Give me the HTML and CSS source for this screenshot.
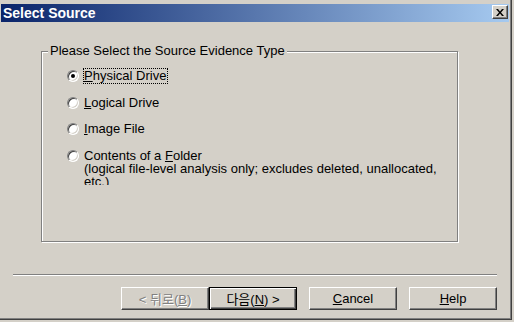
FILE: index.html
```html
<!DOCTYPE html>
<html lang="ko">
<head>
  <meta charset="UTF-8">
  <title>Select Source</title>
  <link rel="stylesheet" href="styles.css">
</head>
<body>

<div class="window">

  <!-- TITLE BAR -->
  <div class="titlebar">
    <span class="title">Select Source</span>
    <span class="close-btn">
      <svg width="8" height="7" viewBox="0 0 8 7">
        <path d="M0 0h2l2 2.5L6 0h2L5 3.5 8 7H6L4 4.5 2 7H0l3-3.5z" fill="#000"/>
      </svg>
    </span>
  </div>

  <div class="client">

    <!-- SOURCE TYPE -->
    <div class="group">
      <span class="legend">Please Select the Source Evidence Type</span>

      <label class="radio-row">
        <span class="radio checked"></span>
        <span class="caption focus"><u>P</u>hysical Drive</span>
      </label>
      <label class="radio-row">
        <span class="radio"></span>
        <span class="caption"><u>L</u>ogical Drive</span>
      </label>
      <label class="radio-row">
        <span class="radio"></span>
        <span class="caption"><u>I</u>mage File</span>
      </label>
      <label class="radio-row">
        <span class="radio"></span>
        <span class="caption">Contents of a <u>F</u>older</span>
      </label>
      <div class="note">(logical file-level analysis only; excludes deleted, unallocated, etc.)</div>
    </div>

    <div class="separator"></div>

    <!-- BUTTONS -->
    <div class="buttons">
      <span class="btn disabled"><span class="kr">&lt; 뒤로(<u>B</u>)</span></span>
      <span class="btn default"><span class="kr">다음(<u>N</u>) &gt;</span></span>
      <span class="btn gap"><u>C</u>ancel</span>
      <span class="btn gap"><u>H</u>elp</span>
    </div>

  </div>
</div>

</body>
</html>
```

FILE: styles.css
```css
body {
    margin: 0;
    background-color: #d4d0c8;
    font-family: "Liberation Sans", Arial, "Noto Sans CJK KR", sans-serif;
    font-size: 13px;
    color: #000;
}

.window {
    width: 512px;
    height: 320px;
    box-sizing: border-box;
    padding: 4px 3px 3px 1px;
    background-color: #d4d0c8;
    box-shadow: inset -1px -1px #404040, inset -2px -2px #808080;
}

.titlebar {
    height: 18px;
    display: flex;
    align-items: flex-start;
    justify-content: space-between;
    background: linear-gradient(to right, #0a246a, #a6caf0);
}

.title {
    color: #fff;
    font-weight: bold;
    font-size: 14px;
    line-height: 18px;
    padding-left: 2px;
}

.close-btn {
    width: 16px;
    height: 14px;
    box-sizing: border-box;
    margin: 1px 1px 0 0;
    display: flex;
    align-items: center;
    justify-content: center;
    background-color: #d4d0c8;
    border: 1px solid;
    border-color: #fff #404040 #404040 #fff;
    box-shadow: inset -1px -1px #808080;
}

.client {
    display: flex;
    flex-direction: column;
}

.group {
    position: relative;
    margin: 29px 0 0 40px;
    width: 417px;
    height: 191px;
    box-sizing: border-box;
    border: 1px solid #808080;
    box-shadow: inset 1px 1px #fff, 1px 1px #fff;
    padding: 16px 0 0 25px;
    display: flex;
    flex-direction: column;
    gap: 10.5px;
}

.legend {
    position: absolute;
    top: -9px;
    left: 6px;
    padding: 0 2px;
    line-height: 16px;
    background-color: #d4d0c8;
}

.radio-row {
    display: flex;
    align-items: center;
    height: 16px;
}

.radio {
    width: 12px;
    height: 12px;
    box-sizing: border-box;
    border-radius: 50%;
    background-color: #fff;
    border: 1px solid;
    border-color: #808080 #fff #fff #808080;
    box-shadow: inset 1px 1px #404040, inset -1px -1px #d4d0c8;
    display: flex;
    align-items: center;
    justify-content: center;
    margin-right: 4px;
}

.radio.checked::after {
    content: "";
    width: 4px;
    height: 4px;
    border-radius: 50%;
    background-color: #000;
}

.caption {
    border: 1px dotted transparent;
    line-height: 14px;
    padding-right: 1px;
}

.caption.focus {
    border-color: #000;
}

.note {
    margin: -12px 0 0 17px;
    width: 370px;
    height: 23px;
    overflow: hidden;
    line-height: 13px;
}

.separator {
    margin: 32px 0 0 12px;
    width: 484px;
    border-top: 1px solid #808080;
    border-bottom: 1px solid #fff;
}

.buttons {
    display: flex;
    margin: 11px 0 0 120px;
}

.btn {
    width: 88px;
    height: 23px;
    box-sizing: border-box;
    display: flex;
    align-items: center;
    justify-content: center;
    border: 1px solid;
    border-color: #fff #404040 #404040 #fff;
    box-shadow: inset -1px -1px #808080;
}

.btn.gap {
    margin-left: 12px;
}

.btn.default {
    border: 1px solid #000;
    box-shadow: inset 1px 1px #fff, inset -1px -1px #404040, inset -2px -2px #808080;
}

.btn.disabled {
    color: #808080;
    text-shadow: 1px 1px #fff;
}

.kr {
    font-size: 13px;
}
```
